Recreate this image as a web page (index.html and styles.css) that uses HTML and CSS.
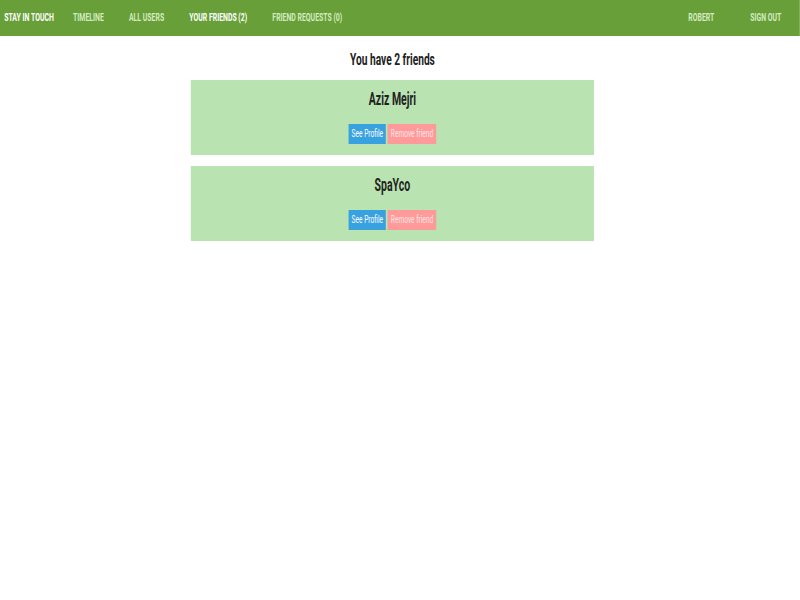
FILE: index.html
```html
<!DOCTYPE html>
<html lang="en">
<head>
<meta charset="utf-8">
<title>Stay in touch - Your friends</title>
<link rel="stylesheet" href="styles.css">
</head>
<body>
<div class="page">
  <nav class="navbar">
    <a class="brand" href="#">STAY IN TOUCH</a>
    <ul class="nav-left">
      <li><a href="#">TIMELINE</a></li>
      <li><a href="#">ALL USERS</a></li>
      <li><a class="active" href="#">YOUR FRIENDS (2)</a></li>
      <li><a href="#">FRIEND REQUESTS (0)</a></li>
    </ul>
    <ul class="nav-right">
      <li><a href="#">ROBERT</a></li>
      <li><a href="#">SIGN OUT</a></li>
    </ul>
  </nav>
  <main class="content">
    <h2 class="title">You have 2 friends</h2>
    <div class="card">
      <h3 class="name">Aziz Mejri</h3>
      <div class="actions">
        <a class="btn btn-blue" href="#">See Profile</a>
        <a class="btn btn-red" href="#">Remove friend</a>
      </div>
    </div>
    <div class="card">
      <h3 class="name">SpaYco</h3>
      <div class="actions">
        <a class="btn btn-blue" href="#">See Profile</a>
        <a class="btn btn-red" href="#">Remove friend</a>
      </div>
    </div>
  </main>
</div>
</body>
</html>
```

FILE: styles.css
```css
html, body {
  margin: 0;
  padding: 0;
  background: #ffffff;
  overflow-x: hidden;
}

.page {
  width: 1333.33px;
  transform: scaleX(0.6);
  transform-origin: 0 0;
  font-family: Roboto, "Liberation Sans", sans-serif;
}

.navbar {
  display: flex;
  align-items: flex-start;
  height: 36px;
  background: #689f38;
}

.navbar a {
  display: block;
  line-height: 34px;
  font-size: 11.5px;
  font-weight: 700;
  text-decoration: none;
  color: #d3ebc0;
}

.navbar .brand {
  color: #ffffff;
  padding: 0 11px 0 7px;
}

.navbar .active {
  color: #ffffff;
}

.nav-left, .nav-right {
  display: flex;
  list-style: none;
  margin: 0;
  padding: 0;
}

.nav-left a {
  padding: 0 21px;
}

.nav-right {
  margin-left: auto;
  margin-right: 1px;
}

.nav-right a {
  padding: 0 30px;
}

.content {
  width: 1308px;
  display: flex;
  flex-direction: column;
  align-items: center;
}

.title {
  margin: 12px 0 10px;
  font-size: 17px;
  line-height: 22px;
  font-weight: 700;
  color: #222222;
}

.card {
  width: 672px;
  box-sizing: border-box;
  background: #b9e3b0;
  padding: 8px 0 11px;
  margin-bottom: 11px;
  text-align: center;
}

.name {
  margin: 0 0 14px;
  font-size: 17.5px;
  line-height: 22px;
  font-weight: 700;
  color: #222222;
}

.actions {
  display: flex;
  justify-content: center;
  gap: 3px;
}

.btn {
  display: block;
  height: 20px;
  line-height: 20px;
  padding: 0 5px;
  font-size: 11px;
  color: #ffffff;
  text-decoration: none;
}

.btn-blue {
  background: #38a1df;
}

.btn-red {
  background: #ff9a9a;
  color: #ffe4e4;
}
```
